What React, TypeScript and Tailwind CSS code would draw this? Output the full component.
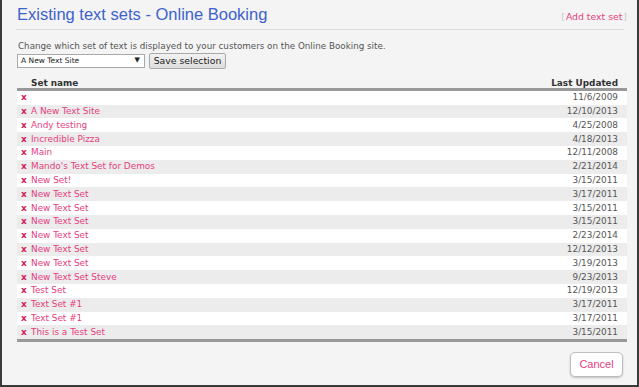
import React from 'react'

type TextSet = {
  name: string;
  updated: string;
}

const sets: TextSet[] = [
  { name: '', updated: '11/6/2009' },
  { name: 'A New Text Site', updated: '12/10/2013' },
  { name: 'Andy testing', updated: '4/25/2008' },
  { name: 'Incredible Pizza', updated: '4/18/2013' },
  { name: 'Main', updated: '12/11/2008' },
  { name: "Mando's Text Set for Demos", updated: '2/21/2014' },
  { name: 'New Set!', updated: '3/15/2011' },
  { name: 'New Text Set', updated: '3/17/2011' },
  { name: 'New Text Set', updated: '3/15/2011' },
  { name: 'New Text Set', updated: '3/15/2011' },
  { name: 'New Text Set', updated: '2/23/2014' },
  { name: 'New Text Set', updated: '12/12/2013' },
  { name: 'New Text Set', updated: '3/19/2013' },
  { name: 'New Text Set Steve', updated: '9/23/2013' },
  { name: 'Test Set', updated: '12/19/2013' },
  { name: 'Text Set #1', updated: '3/17/2011' },
  { name: 'Text Set #1', updated: '3/17/2011' },
  { name: 'This is a Test Set', updated: '3/15/2011' },
]

const Row = ({ item, odd }: { item: TextSet; odd: boolean }) => {
  return (
    <div className={`flex h-[13.8px] items-center ${odd ? 'bg-[#ececec]' : 'bg-white'}`}>
      <span className="w-[14px] pl-[4px] text-[9px] font-bold leading-none text-[#d81b5a]">x</span>
      <span className="flex-1 text-[#e6407e]">{item.name}</span>
      <span className="pr-[9px] text-[#555]">{item.updated}</span>
    </div>
  )
}

export default function App() {
  return (
    <div className="h-[387px] w-[639px] overflow-hidden border-x-2 border-b-2 border-[#3a3a3a] bg-[#f4f4f4] font-['DejaVu_Sans',sans-serif] text-[8.9px] leading-none">
      <div className="pl-[14px] pr-[13px]">
        {/* heading */}
        <div className="flex h-[30px] items-end justify-between border-b border-[#dcdcdc] pb-[5px]">
          <h1 className="pl-[1px] font-['Liberation_Sans',sans-serif] text-[16.5px] leading-[20px] text-[#3d62cf]">
            Existing text sets - Online Booking
          </h1>
          <div className="-mr-[3px] pb-[3px] text-[9.3px]">
            <span className="text-[#c8c8c8]">[</span>
            <span className="px-[1px] text-[#e6407e]">Add text set</span>
            <span className="text-[#c8c8c8]">]</span>
          </div>
        </div>

        <p className="mt-[12px] pl-[2px] text-[8.75px] text-[#555]">
          Change which set of text is displayed to your customers on the Online Booking site.
        </p>

        <div className="mt-[2px] flex items-center gap-[4px] pl-[1px]">
          <div className="flex h-[14px] w-[128px] items-center justify-between border border-[#a9a9a9] bg-white pl-[3px] pr-[4px] text-[7.5px] text-[#222]">
            <span>A New Text Site</span>
            <span className="text-[7px]">▼</span>
          </div>
          <div className="flex h-[16px] w-[77px] items-center justify-center rounded-[2px] border border-[#a8a8a8] bg-gradient-to-b from-[#f2f2f2] to-[#dedede] text-[9.3px] text-[#222]">
            Save selection
          </div>
        </div>

        {/* table */}
        <div className="w-[611px] pl-[1px]">
          <div className="flex h-[22px] items-end border-b-[3px] border-[#999] font-bold text-[#333]">
            <span className="flex-1 pl-[14px]">Set name</span>
            <span className="pr-[9px]">Last Updated</span>
          </div>
          <div className="border-b-[3px] border-[#999]">
            {sets.map((item, i) => (
              <Row key={i} item={item} odd={i % 2 === 1} />
            ))}
          </div>
        </div>

        <div className="mt-[10px] flex justify-end pr-[1px]">
          <div className="flex h-[25px] w-[53px] items-center justify-center rounded-[5px] border border-[#bdbdbd] bg-white font-['Liberation_Sans',sans-serif] text-[11px] text-[#e6407e] shadow-[0_1px_2px_rgba(0,0,0,0.2)]">
            Cancel
          </div>
        </div>
      </div>
    </div>
  )
}
